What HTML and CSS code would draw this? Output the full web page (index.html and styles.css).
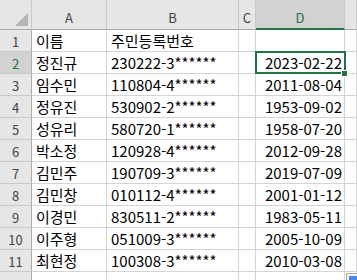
FILE: index.html
```html
<!DOCTYPE html>
<html lang="ko">
<head>
    <meta charset="UTF-8">
    <title>Sheet1</title>
    <link rel="stylesheet" href="styles.css">
</head>
<body>

    <div class="sheet">
        <!-- kolonneoverskrifter -->
        <div class="hd corner">
            <svg width="13" height="13" viewBox="0 0 13 13"><polygon points="13,0 13,13 0,13" fill="#b4b4b4"/></svg>
        </div>
        <div class="hd">A</div>
        <div class="hd">B</div>
        <div class="hd">C</div>
        <div class="hd sel-col">D</div>
        <div class="hd last"></div>

        <div class="hd row">1</div>
        <div class="cell">이름</div>
        <div class="cell">주민등록번호</div>
        <div class="cell"></div>
        <div class="cell"></div>
        <div class="cell"></div>

        <div class="hd row sel-row">2</div>
        <div class="cell">정진규</div>
        <div class="cell">230222-3******</div>
        <div class="cell"></div>
        <div class="cell num active">2023-02-22<span class="handle"></span></div>
        <div class="cell"></div>

        <div class="hd row">3</div>
        <div class="cell">임수민</div>
        <div class="cell">110804-4******</div>
        <div class="cell"></div>
        <div class="cell num">2011-08-04</div>
        <div class="cell"></div>

        <div class="hd row">4</div>
        <div class="cell">정유진</div>
        <div class="cell">530902-2******</div>
        <div class="cell"></div>
        <div class="cell num">1953-09-02</div>
        <div class="cell"></div>

        <div class="hd row">5</div>
        <div class="cell">성유리</div>
        <div class="cell">580720-1******</div>
        <div class="cell"></div>
        <div class="cell num">1958-07-20</div>
        <div class="cell"></div>

        <div class="hd row">6</div>
        <div class="cell">박소정</div>
        <div class="cell">120928-4******</div>
        <div class="cell"></div>
        <div class="cell num">2012-09-28</div>
        <div class="cell"></div>

        <div class="hd row">7</div>
        <div class="cell">김민주</div>
        <div class="cell">190709-3******</div>
        <div class="cell"></div>
        <div class="cell num">2019-07-09</div>
        <div class="cell"></div>

        <div class="hd row">8</div>
        <div class="cell">김민창</div>
        <div class="cell">010112-4******</div>
        <div class="cell"></div>
        <div class="cell num">2001-01-12</div>
        <div class="cell"></div>

        <div class="hd row">9</div>
        <div class="cell">이경민</div>
        <div class="cell">830511-2******</div>
        <div class="cell"></div>
        <div class="cell num">1983-05-11</div>
        <div class="cell"></div>

        <div class="hd row">10</div>
        <div class="cell">이주형</div>
        <div class="cell">051009-3******</div>
        <div class="cell"></div>
        <div class="cell num">2005-10-09</div>
        <div class="cell"></div>

        <div class="hd row">11</div>
        <div class="cell">최현정</div>
        <div class="cell">100308-3******</div>
        <div class="cell"></div>
        <div class="cell num">2010-03-08</div>
        <div class="cell"></div>

        <div class="hd row"></div>
        <div class="cell"></div>
        <div class="cell"></div>
        <div class="cell"></div>
        <div class="cell"></div>
        <div class="cell"></div>

        <!-- hurtiganalyse-knapp nede til høyre -->
        <div class="quick"><span></span></div>
    </div>

</body>
</html>
```

FILE: styles.css
```css
* {
    margin: 0;
    box-sizing: border-box;
}
body {
    background-color: white;
    overflow: hidden;
}
.sheet {
    position: relative;
    display: grid;
    grid-template-columns: 32px 75px 132px 17px 89px 1fr;
    grid-template-rows: 30px;
    grid-auto-rows: 22px;
    width: 357px;
    height: 280px;
    overflow: hidden;
    font-family: "Noto Sans CJK KR", "Noto Sans", sans-serif;
}
.cell {
    border-right: 1px solid #d4d4d4;
    border-bottom: 1px solid #d4d4d4;
    padding: 0 3px 0 4px;
    font-size: 15px;
    line-height: 21px;
    color: #000;
    white-space: nowrap;
}
.num {
    text-align: right;
    padding-right: 2px;
}
.hd {
    background-color: #e6e6e6;
    border-right: 1px solid #c8c8c8;
    border-bottom: 1px solid #ababab;
    color: #444;
    font-size: 13px;
    text-align: center;
    padding-top: 6px;
    line-height: 23px;
}
.hd.row {
    border-right: 1px solid #ababab;
    border-bottom: 1px solid #c8c8c8;
    line-height: 21px;
    padding-top: 1px;
}
.corner {
    display: flex;
    align-items: flex-end;
    justify-content: flex-end;
    padding: 0 3px 3px 0;
}
.corner svg {
    display: block;
}
.sel-col {
    background-color: #d2d2d2;
    color: #217346;
    border-bottom: 2px solid #217346;
}
.sel-row {
    background-color: #d2d2d2;
    color: #217346;
    border-right: 2px solid #217346;
}
.active {
    position: relative;
    z-index: 1;
}
.active::after {
    content: "";
    position: absolute;
    top: -1px;
    left: -1px;
    right: -2px;
    bottom: -1px;
    border: 2px solid #217346;
}
.handle {
    position: absolute;
    right: -4px;
    bottom: -4px;
    width: 7px;
    height: 7px;
    background-color: #217346;
    border: 1px solid white;
    z-index: 2;
}
.quick {
    position: absolute;
    left: 346px;
    top: 273px;
    width: 16px;
    height: 14px;
    background-color: #f4f4f4;
    border: 1px solid #a6a6a6;
    padding: 2px;
}
.quick span {
    display: block;
    width: 10px;
    height: 8px;
    background-color: #4a86e8;
}
```
